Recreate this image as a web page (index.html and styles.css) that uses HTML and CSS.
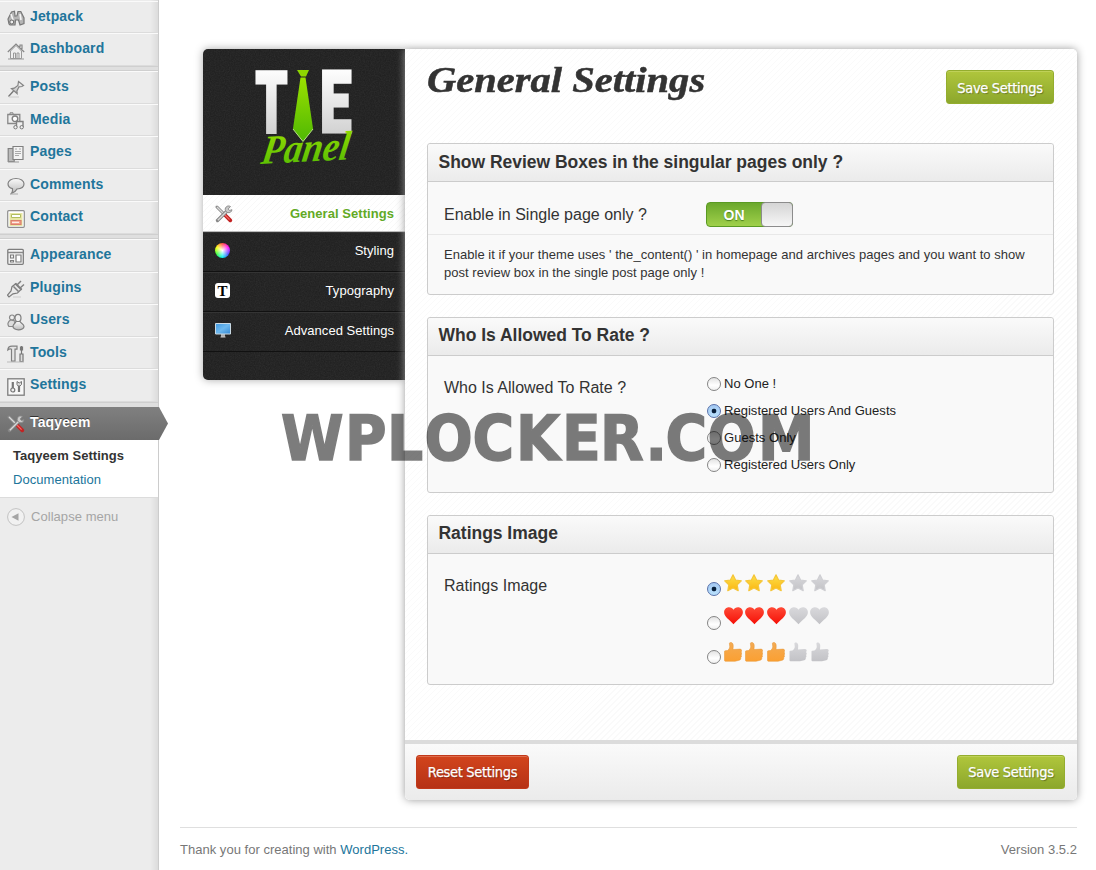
FILE: index.html
```html
<!DOCTYPE html>
<html lang="en">
<head>
<meta charset="utf-8">
<title>Taqyeem Settings</title>
<link rel="stylesheet" href="styles.css">
</head>
<body>
<svg class="defs" width="0" height="0">
  <defs>
    <linearGradient id="gold" x2="0" y2="1"><stop stop-color="#fce04a"/><stop offset="1" stop-color="#fcb712"/></linearGradient>
    <linearGradient id="red" x2="0" y2="1"><stop stop-color="#ff4a36"/><stop offset="1" stop-color="#f50f06"/></linearGradient>
    <linearGradient id="orange" x2="0" y2="1"><stop stop-color="#f3ab55"/><stop offset="1" stop-color="#fba032"/></linearGradient>
    <linearGradient id="silver" x2="0" y2="1"><stop stop-color="#d9d9dc"/><stop offset="1" stop-color="#c2c2c6"/></linearGradient>
    <linearGradient id="gray" x2="0" y2="1"><stop stop-color="#fafafa"/><stop offset="1" stop-color="#bbb"/></linearGradient>
    <linearGradient id="green" x2="0" y2="1"><stop stop-color="#9be000"/><stop offset="1" stop-color="#4fb804"/></linearGradient>
    <linearGradient id="letter" x2="0" y2="1"><stop offset=".15" stop-color="#fff"/><stop offset="1" stop-color="#c4c4c4"/></linearGradient>
    <linearGradient id="screen" x2="1" y2="1"><stop stop-color="#3f97df"/><stop offset=".5" stop-color="#6db8ee"/><stop offset="1" stop-color="#3387d2"/></linearGradient>
    <symbol id="star" viewBox="0 0 18 18"><path d="M9 .8l2.600 5.200 5.700.8-4.100 4 1 5.900L9 14 3.800 16.700l1-5.900-4.100-4 5.700-.8z" stroke-linejoin="round" stroke-width="1.200"/></symbol>
    <symbol id="heart" viewBox="0 0 19 18"><path d="M9.500 17.300C6 13 .1 10 .1 5.300.1 2.500 2.200.3 5 .3c2 0 3.700 1 4.500 2.500C10.300 1.300 12 .3 14 .3c2.800 0 4.900 2.200 4.900 5C18.900 10 13 13 9.500 17.300z"/></symbol>
    <symbol id="thumb" viewBox="0 0 18 20"><path d="M.5 9.500Q.5 8.800 1.300 8.700L3.500 8.500Q5.400 7.500 5.800 5L5.400 1.500C5.400 0 8.300-.2 9 2.300 9.500 4 9 6 9 7.500l7-.4c1.900 0 2.100 2.300.9 2.900 1.200.7 1 2.500 0 3 .9.700.7 2.300-.3 2.700.5 1.200 0 2.300-1.400 2.500L11 19.300H1.500q-1 0-1-1z"/></symbol>
    <symbol id="tools" viewBox="0 0 18 18"><path d="M2 2l9 9" stroke="#8b8b8b" stroke-width="3" stroke-linecap="round"/><path d="M2 2l9 9" stroke="#d9d9d9" stroke-width="1.300"/><path d="M10 10l5.300 5.300" stroke="#c32222" stroke-width="3.800" stroke-linecap="round"/><path d="M10 10l4.600 4.600" stroke="#f26a66" stroke-width="1.200"/><path d="M2.500 15.500l9-9" stroke="#858585" stroke-width="3.400" stroke-linecap="round"/><path d="M2.800 15.200l9-9" stroke="#d8d8d8" stroke-width="1.400"/><path d="M15.500 1.500a3.400 3.400 0 1 0 1.500 3.200l-2.500.8-1.300-1.500z" fill="#c8c8c8" stroke="#888" stroke-width=".9"/></symbol>
  </defs>
</svg>
<div class="admin">
  <aside class="side">
    <ul class="menu">
      <li class="item"><svg viewBox="0 0 18 18"><path d="M2 15L1 10 4.500 3l3-.8L8 7l2-.2 1-4.300 2.800 0L17 9v5.500l-4 1.500-1.500-5h-3L8 16H3z" fill="#b5b5b5" stroke="#777" stroke-width="1.200"/><path d="M4 5l2 6M13 5l1 6" stroke="#f4f4f4" stroke-width="1.600"/><circle cx="4.800" cy="13" r="2" fill="#eee" stroke="#666"/></svg><a>Jetpack</a></li>
      <li class="item"><svg viewBox="0 0 18 18"><path d="M3.500 9v7.500h11V9L9 3.500z" fill="#eee" stroke="#999"/><path d="M.8 10L9 2l8.200 8M13 5V3h2v4" fill="none" stroke="#888" stroke-width="1.200"/><path d="M6.500 16v-5h2v5M10 16v-5h2v5M1 17h16" fill="none" stroke="#999"/></svg><a>Dashboard</a></li>
      <li class="sep"></li>
      <li class="item"><svg viewBox="0 0 18 18"><path d="M11.500 1.500l5 4-1.600 1-3 .4-2 4.100.2 2.500L4.500 8.600l2.800-.4 3.600-2.700z" fill="url(#gray)" stroke="#858585" stroke-width="1.200"/><path d="M6.500 11l-5 5.500" stroke="#777" stroke-width="1.300"/><path d="M2 17h10" stroke="#ccc"/></svg><a>Posts</a></li>
      <li class="item"><svg viewBox="0 0 18 18"><path d="M.8 2.500h12v9H.8z" fill="#eee" stroke="#888" stroke-width="1.300"/><path d="M3 2V.8h3V2" stroke="#888" fill="none"/><circle cx="8" cy="6.800" r="2.800" fill="#fff" stroke="#808080" stroke-width="1.400"/><path d="M9.500 15V9.500h6.500V15" fill="#eee" stroke="#808080" stroke-width="1.400"/><circle cx="8.500" cy="15.200" r="1.700" fill="#eee" stroke="#777"/><circle cx="14.700" cy="15.200" r="1.700" fill="#eee" stroke="#777"/></svg><a>Media</a></li>
      <li class="item"><svg viewBox="0 0 18 18"><path d="M1.200 3.500h6v13h-6z" fill="#bbb" stroke="#808080" stroke-width="1.200"/><path d="M6 1.500h10v13H6z" fill="#f3f3f3" stroke="#808080" stroke-width="1.200"/><path d="M8 4h2m2 0h2M8 6.500h6M8 8.500h6M8 10.500h4" stroke="#aaa"/><path d="M1 17h11" stroke="#999"/></svg><a>Pages</a></li>
      <li class="item"><svg viewBox="0 0 18 18"><path d="M9 1.500c4.500 0 8 2.300 8 5.300s-3 5-7 5.200c-1 2-2.500 3.500-5.500 4.300 1-1.300 1.300-2.800 1-4.600C2.800 11 1 9.200 1 6.800c0-3 3.500-5.300 8-5.300z" fill="url(#gray)" stroke="#808080" stroke-width="1.200"/><path d="M3 17h8" stroke="#aaa"/></svg><a>Comments</a></li>
      <li class="item"><svg viewBox="0 0 18 18"><rect x=".7" y=".7" width="16.600" height="16.600" rx="1" fill="#fff" stroke="#8e8e8e" stroke-width="1.200"/><path d="M2.500 3h13v13h-13z" fill="#e8e7a5"/><path d="M4.500 4.500h9v3h-9z" fill="#fff" stroke="#b1bd60"/><path d="M4 10.500h10v4H4z" fill="#f4a18b" stroke="#d9806e" stroke-width="1.200"/><path d="M5 12.300h7" stroke="#fff"/></svg><a>Contact</a></li>
      <li class="sep"></li>
      <li class="item"><svg viewBox="0 0 18 18"><rect x=".8" y="1.300" width="15.500" height="15" rx="1" fill="#f5f5f5" stroke="#7d7d7d" stroke-width="1.300"/><path d="M1 4.500h15" stroke="#888" stroke-width="1.500"/><path d="M3.500 7h3v3h-3zM9 7h5v7H9zM3.500 12.500h3v1.500h-3z" fill="#fff" stroke="#7d7d7d" stroke-width="1.200"/></svg><a>Appearance</a></li>
      <li class="item"><svg viewBox="0 0 18 18"><path d="M9 3.500l-4 3.200-1 4.300-3.500 4.200 1.500 1.800 4-3.200 4.500-.8 4-4z" fill="#e9e9e9" stroke="#7c7c7c" stroke-width="1.200"/><path d="M10 5L14 1M12.500 8.500L17 4.500M8 3.500l6.500 6.500M6.500 6.500l5 5" stroke="#808080" stroke-width="1.500" fill="none"/><path d="M6 17h8" stroke="#ccc"/></svg><a>Plugins</a></li>
      <li class="item"><svg viewBox="0 0 18 18"><circle cx="5" cy="4.500" r="2.500" fill="#eee" stroke="#888" stroke-width="1.200"/><path d="M3.500 7C1 8.500 0 11.500 2 13.500h5L8 8z" fill="#ddd" stroke="#888" stroke-width="1.200"/><ellipse cx="11" cy="5" rx="3" ry="3.700" fill="#eee" stroke="#808080" stroke-width="1.200"/><path d="M9 8.500c-.5 2-2.500 2-3 4.500-.5 5 11 5 11 .5 0-2.500-3.200-3-4-5z" fill="url(#gray)" stroke="#808080" stroke-width="1.200"/></svg><a>Users</a></li>
      <li class="item"><svg viewBox="0 0 18 18"><path d="M.8 5C1 2 3 1.200 5 1.200h5v3H8v12H4.500V4.200C3 3.500 2 4 .8 5z" fill="#e5e5e5" stroke="#808080" stroke-width="1.200"/><path d="M14.500 1v8M13 9h3v7.500h-3zM13.500 2h2v3h-2z" fill="#ddd" stroke="#777" stroke-width="1.200"/><path d="M0 17h17" stroke="#bbb"/></svg><a>Tools</a></li>
      <li class="item"><svg viewBox="0 0 18 18"><rect x=".8" y=".8" width="16.400" height="16.400" fill="#f7f7f7" stroke="#7d7d7d" stroke-width="1.300"/><path d="M5.800 4v7M12 8v6" stroke="#777" stroke-width="2.200"/><circle cx="5.800" cy="12" r="2" fill="#eee" stroke="#777" stroke-width="1.200"/><path d="M10 3.500v3l1 1.500h2l1.500-1.500v-3L12.200 5z" fill="#ddd" stroke="#777"/></svg><a>Settings</a></li>
      <li class="sep last"></li>
      <li class="item current"><svg viewBox="0 0 18 18"><use href="#tools"/></svg><a>Taqyeem</a></li>
    </ul>
    <div class="submenu"><a class="on">Taqyeem Settings</a><a>Documentation</a></div>
    <div class="collapse"><svg viewBox="0 0 18 18"><circle cx="9" cy="9" r="8.400" fill="#f1f1f1" stroke="#c2c2c2"/><path d="M4.500 9l7-3.800v7.600z" fill="#a5a5a5"/></svg><span>Collapse menu</span></div>
  </aside>

  <main class="main">
    <div class="tie">
      <nav class="tabs">
        <svg class="noise" width="202" height="331"><filter id="n"><feTurbulence type="fractalNoise" baseFrequency=".8" numOctaves="2" seed="4"/><feColorMatrix type="saturate" values="0"/></filter><rect width="202" height="331" filter="url(#n)"/></svg>
        <div class="brand">
          <svg width="202" height="146" viewBox="203 49 202 146">
            <g class="letters"><text transform="translate(255.500 132) scale(.64 1)" textLength="50" lengthAdjust="spacingAndGlyphs">T</text><text transform="translate(320 132) scale(.64 1)" textLength="49" lengthAdjust="spacingAndGlyphs">E</text></g>
            <path d="M297 70h12l-3 6.500h-5z" fill="#8ed600"/><path d="M300.500 77.500h5l7.500 51-10 13-10-13z" fill="url(#green)"/><path d="M293 129l10 12.500 10-12.500" fill="none" stroke="#b8ea80"/>
            <text class="script" transform="translate(260 164) rotate(-3) skewX(-12)" textLength="88" lengthAdjust="spacingAndGlyphs">Panel</text>
          </svg>
        </div>
        <div class="tab active"><svg width="18" height="18"><use href="#tools"/></svg><span>General Settings</span></div>
        <div class="tab"><i class="wheel"></i><span>Styling</span></div>
        <div class="tab"><i class="type">T</i><span>Typography</span></div>
        <div class="tab"><svg width="16" height="16" viewBox="0 0 16 16"><path d="M6 11h4v3H6z" fill="#aaa"/><path d="M5.500 14h5" stroke="#ccc"/><path d="M.5 .5h15v10.500H.5z" fill="url(#screen)" stroke="#c9d9e4"/></svg><span>Advanced Settings</span></div>
      </nav>

      <section class="panel">
        <header class="head"><h1>General Settings</h1><a class="btn">Save Settings</a></header>

        <div class="box single">
          <h2>Show Review Boxes in the singular pages only ?</h2>
          <div class="option"><label>Enable in Single page only ?</label><div class="switch"><b>ON</b><i></i></div></div>
          <p class="hint">Enable it if your theme uses ' the_content() ' in homepage and archives pages and you want to show<br>post review box in the single post page only !</p>
        </div>

        <div class="box rate">
          <h2>Who Is Allowed To Rate ?</h2>
          <div class="option"><label>Who Is Allowed To Rate ?</label>
            <div class="choices">
              <div class="choice"><i class="radio"></i>No One !</div>
              <div class="choice"><i class="radio on"></i>Registered Users And Guests</div>
              <div class="choice"><i class="radio"></i>Guests Only</div>
              <div class="choice"><i class="radio"></i>Registered Users Only</div>
            </div>
          </div>
        </div>

        <div class="box images">
          <h2>Ratings Image</h2>
          <div class="option"><label>Ratings Image</label>
            <div class="scores">
              <div class="score stars"><i class="radio on"></i><svg class="full"><use href="#star"/></svg><svg class="full"><use href="#star"/></svg><svg class="full"><use href="#star"/></svg><svg><use href="#star"/></svg><svg><use href="#star"/></svg></div>
              <div class="score hearts"><i class="radio"></i><svg class="full"><use href="#heart"/></svg><svg class="full"><use href="#heart"/></svg><svg class="full"><use href="#heart"/></svg><svg><use href="#heart"/></svg><svg><use href="#heart"/></svg></div>
              <div class="score thumbs"><i class="radio"></i><svg class="full"><use href="#thumb"/></svg><svg class="full"><use href="#thumb"/></svg><svg class="full"><use href="#thumb"/></svg><svg><use href="#thumb"/></svg><svg><use href="#thumb"/></svg></div>
            </div>
          </div>
        </div>

        <footer class="actions"><a class="btn reset">Reset Settings</a><a class="btn">Save Settings</a></footer>
      </section>
    </div>
    <footer class="foot"><span>Thank you for creating with <a>WordPress.</a></span><span>Version 3.5.2</span></footer>
  </main>
  <svg class="watermark" width="560" height="80" viewBox="-10 -10 560 80"><text y="53" x="3 67 109 146.500 194.500 238 284 322 367.500 387.500 429.500 480">WPLOCKER.COM</text></svg>
</div>
</body>
</html>
```
FILE: styles.css
```css
* { box-sizing: border-box; }
body { margin: 0; background: #fff; color: #333; font: 13px/18px "Liberation Sans", Arial, sans-serif; }
.defs { position: absolute; }
.admin { position: relative; display: flex; width: 1096px; height: 870px; overflow: hidden; }

/* admin menu */
.side { width: 159px; flex: none; height: 870px; background: linear-gradient(to right, #ececec 150px, #dcdcdc 158px, #cacaca 158px); border-right: 1px solid #ccc; padding-top: .8px; }
.menu { list-style: none; margin: 0; padding: 0; }
.item { display: flex; height: 32.6px; border-top: 1px solid #fafafa; border-bottom: 1px solid #dcdcdc; padding-left: 7px; }
.item svg { width: 18px; height: 18px; margin-top: 7.600px; flex: none; }
.item a { margin: 5px 0 0 5px; font-weight: bold; font-size: 14px; letter-spacing: .14px; color: #21759b; }
.sep { height: 5px; background: #dfdfdf; border-top: 1px solid #cfcfcf; border-bottom: 1px solid #cfcfcf; }
.sep.last { border-bottom: 0; }
.item.current { position: relative; height: 33px; border: 0; background: linear-gradient(#808080, #6b6b6b); }
.item.current::after { content: ""; position: absolute; left: 158px; top: 0; width: 10px; height: 33px; background: linear-gradient(#808080, #6b6b6b); clip-path: polygon(0 0, 10% 0, 100% 50%, 10% 100%, 0 100%); }
.item.current a { color: #fff; text-shadow: 0 -1px 0 #333; margin-top: 6px; }
.submenu { display: flex; flex-direction: column; gap: 6px; height: 58px; padding: 7px 0 0 13px; background: #fff; border-bottom: 1px solid #dcdcdc; }
.submenu a { color: #21759b; letter-spacing: .05px; }
.submenu .on { color: #333; font-weight: bold; }
.collapse { display: flex; align-items: center; gap: 6px; padding: 10px 0 0 7px; color: #a5a5a5; letter-spacing: .05px; }
.collapse svg { width: 18px; height: 18px; }

.main { flex: 1; padding: 49px 19px 0 21px; }
.tie { display: flex; align-items: flex-start; padding-left: 23px; }

/* tab column */
.tabs { position: relative; overflow: hidden; width: 202px; height: 331px; flex: none; border-radius: 5px 0 0 5px; background: #1e1e1e; box-shadow: 0 0 8px #aaa; }
.noise { position: absolute; left: 0; top: 0; opacity: .1; }
.brand { position: relative; height: 146px; }
.brand svg { display: block; }
.letters { font: 900 86px Roboto, sans-serif; fill: url(#letter); stroke: url(#letter); stroke-width: 3px; }
.script { font: italic bold 41px "Liberation Serif", serif; fill: url(#green); }
.tab { position: relative; display: flex; justify-content: space-between; height: 40px; padding: 10px 11px 0 12px; color: #fff; border-bottom: 1px solid #111; border-top: 1px solid #343434; letter-spacing: .05px; }
.tab span { line-height: 17px; margin-top: -1px; }
.tab.active span { margin-top: 0; }
.tab.active { height: 37px; color: #62aa25; font-weight: bold; border: 0; border-bottom: 1px solid #bbb; background: repeating-linear-gradient(135deg, #fff 0 3.200px, #f8f8f8 3.200px 4.240px); }
.wheel { width: 15px; height: 15px; border-radius: 50%; background: radial-gradient(#fff, transparent 70%), conic-gradient(#f44, #f0f, #44f, #0ee, #3f3, #ff0, #f44); }
.tab .type { width: 15px; height: 15px; border-radius: 3px; background: #fff; color: #000; font: bold 15px/16px "Liberation Serif", serif; text-align: center; }

/* settings panel */
.panel { position: relative; display: flex; flex-direction: column; width: 672px; height: 751px; border-radius: 0 5px 5px 5px; background: repeating-linear-gradient(135deg, #fff 0 3.200px, #fafafa 3.200px 4.240px); box-shadow: 0 0 8px #999; padding: 0 23px 0 22px; }
.head { display: flex; justify-content: space-between; height: 94px; padding-top: 21px; }
h1 { margin: -9px 0 0; font: italic bold 36px/38px "Liberation Serif", serif; color: #333; white-space: nowrap; transform: scaleX(1.126); transform-origin: 0 0; -webkit-text-stroke: .5px #333; }
.btn { height: 34px; padding: 0; border: 1px solid #94ad2e; border-radius: 3px; background: linear-gradient(#b0c63c, #8ca72c); box-shadow: inset 0 1px 0 #bfd158; color: #fff; font: 14.500px/34px "DejaVu Sans Condensed", "Noto Sans", sans-serif; letter-spacing: -.34px; -webkit-text-stroke: .25px #fff; text-shadow: 1px 1px 1px rgba(0,0,0,.35); white-space: nowrap; width: 108px; text-align: center; }
.actions .btn { line-height: 33px; }
.btn.reset { width: 113px; border-color: #c1391a; background: linear-gradient(#d2441c, #b63216); box-shadow: inset 0 1px 0 #de6d4c; }
.box { height: 152px; margin-bottom: 22px; border: 1px solid #ccc; border-radius: 3px; background: #f9f9f9; flex: none; }
.box.rate { height: 176px; }
.box.images { height: 170px; }
h2 { margin: 0; height: 38px; padding-left: 10.500px; border-bottom: 1px solid #ccc; border-radius: 3px 3px 0 0; background: linear-gradient(#fafafa, #ebebeb); font: bold 17.500px/35px "Liberation Sans", sans-serif; letter-spacing: -.02px; color: #333; }
.single h2 { line-height: 37px; }
.option { display: flex; padding-left: 16px; }
.option label { width: 262px; padding-top: 22px; font-size: 16px; line-height: 20px; }
.single .option { height: 53px; border-bottom: 1px solid #e8e8e8; }
.single .option label { padding-top: 23px; }
.switch { display: flex; width: 87px; height: 25px; margin-top: 20px; border: 1px solid #5a9a23; border-radius: 4px; background: linear-gradient(#6ba82c, #a0d04a); }
.switch b { width: 54px; flex: none; color: #fff; font: bold 14px/24px "Liberation Sans", sans-serif; text-align: center; text-shadow: 0 1px 1px #4a7e1c; }
.switch i { width: 32px; height: 25px; margin: -1px -1px 0 0; flex: none; border: 1px solid #8c8c8c; border-radius: 4px; background: linear-gradient(#d5d5d5, #f6f6f6); }
.hint { margin: 0; padding: 11px 0 0 16px; line-height: 18px; letter-spacing: .035px; }
.choices { padding-top: 14px; color: #222; }
.choice { display: flex; align-items: center; height: 27px; letter-spacing: .03px; }
.radio { width: 14px; height: 14px; margin: 0 3px 0 1px; flex: none; border: 1px solid #858585; border-radius: 50%; background: linear-gradient(#e3e3e3, #fff 60%, #f0f0f0); }
.radio.on { border-color: #5972ab; background: radial-gradient(circle, #08203c 0 2px, transparent 2.700px), linear-gradient(#a3c8f2, #b9e1fd); }
.scores { padding-top: 18px; }
.score { display: flex; align-items: flex-start; height: 34px; }
.score .radio { margin: 10px 2.500px 0 1px; }
.score svg { width: 18px; height: 18px; margin: 2px 3.800px 0 0; fill: url(#silver); stroke: none; }
.stars svg { stroke: #cfcfd3; }
.score.hearts svg { width: 19px; margin: 1px 2.700px 0 0; }
.score.hearts .full { fill: url(#red); }
.score.thumbs svg { height: 20px; margin-top: 1.500px; }
.score.thumbs .full { fill: url(#orange); stroke: #e7922c; stroke-width: .5; }
.score.stars .full { fill: url(#gold); stroke: #f5c63a; }
.actions { display: flex; justify-content: space-between; margin: auto -23px 0 -22px; height: 60px; padding: 11px 12px 0 11px; border-top: 4px solid #dcdcdc; border-radius: 0 0 5px 5px; background: linear-gradient(#fafafa, #ebebeb); }

.foot { display: flex; justify-content: space-between; margin-top: 27px; padding: 13px 0 0; border-top: 1px solid #dfdfdf; color: #777; width: 897px; letter-spacing: .02px; }
.foot a { color: #21759b; }

/* stamp over the page */
.watermark { position: absolute; left: 268px; top: 397px; opacity: .51; font: bold 63px "DejaVu Sans Condensed", "DejaVu Sans", sans-serif; font-stretch: condensed; fill: #000; stroke: #000; stroke-width: 1.500px; }
```
